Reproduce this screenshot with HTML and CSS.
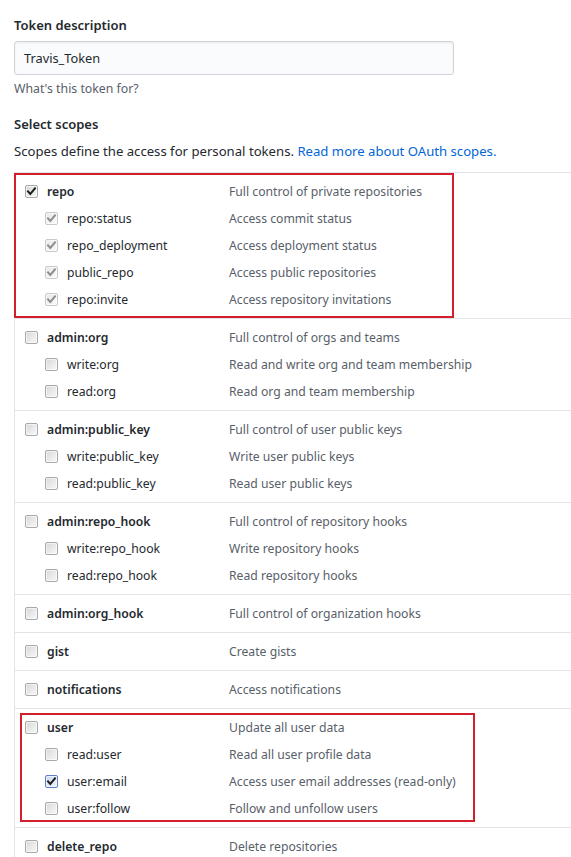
FILE: index.html
```html
<!DOCTYPE html>
<html>
<head>
<meta charset="utf-8">
<link rel="stylesheet" href="styles.css">
</head>
<body>
<div class="page">
  <div class="field-label">Token description</div>
  <div class="input">Travis_Token</div>
  <div class="note">What's this token for?</div>
  <div class="field-label scopes-title">Select scopes</div>
  <div class="intro">Scopes define the access for personal tokens. <a class="link">Read more about OAuth scopes.</a></div>

  <div class="scope-list">
    <div class="group">
      <div class="row main"><span class="cb"><svg class="chk" viewBox="0 0 13 13"><path d="M3 6.3 L5.3 9 L10 3.3"/></svg></span><span class="name">repo</span><span class="desc">Full control of private repositories</span></div>
      <div class="row sub"><span class="cb dis"><svg class="chk" viewBox="0 0 13 13"><path d="M3 6.3 L5.3 9 L10 3.3"/></svg></span><span class="name">repo:status</span><span class="desc">Access commit status</span></div>
      <div class="row sub"><span class="cb dis"><svg class="chk" viewBox="0 0 13 13"><path d="M3 6.3 L5.3 9 L10 3.3"/></svg></span><span class="name">repo_deployment</span><span class="desc">Access deployment status</span></div>
      <div class="row sub"><span class="cb dis"><svg class="chk" viewBox="0 0 13 13"><path d="M3 6.3 L5.3 9 L10 3.3"/></svg></span><span class="name">public_repo</span><span class="desc">Access public repositories</span></div>
      <div class="row sub"><span class="cb dis"><svg class="chk" viewBox="0 0 13 13"><path d="M3 6.3 L5.3 9 L10 3.3"/></svg></span><span class="name">repo:invite</span><span class="desc">Access repository invitations</span></div>
    </div>
    <div class="group">
      <div class="row main"><span class="cb"></span><span class="name">admin:org</span><span class="desc">Full control of orgs and teams</span></div>
      <div class="row sub"><span class="cb"></span><span class="name">write:org</span><span class="desc">Read and write org and team membership</span></div>
      <div class="row sub"><span class="cb"></span><span class="name">read:org</span><span class="desc">Read org and team membership</span></div>
    </div>
    <div class="group">
      <div class="row main"><span class="cb"></span><span class="name">admin:public_key</span><span class="desc">Full control of user public keys</span></div>
      <div class="row sub"><span class="cb"></span><span class="name">write:public_key</span><span class="desc">Write user public keys</span></div>
      <div class="row sub"><span class="cb"></span><span class="name">read:public_key</span><span class="desc">Read user public keys</span></div>
    </div>
    <div class="group">
      <div class="row main"><span class="cb"></span><span class="name">admin:repo_hook</span><span class="desc">Full control of repository hooks</span></div>
      <div class="row sub"><span class="cb"></span><span class="name">write:repo_hook</span><span class="desc">Write repository hooks</span></div>
      <div class="row sub"><span class="cb"></span><span class="name">read:repo_hook</span><span class="desc">Read repository hooks</span></div>
    </div>
    <div class="group">
      <div class="row main"><span class="cb"></span><span class="name">admin:org_hook</span><span class="desc">Full control of organization hooks</span></div>
    </div>
    <div class="group">
      <div class="row main"><span class="cb"></span><span class="name">gist</span><span class="desc">Create gists</span></div>
    </div>
    <div class="group">
      <div class="row main"><span class="cb"></span><span class="name">notifications</span><span class="desc">Access notifications</span></div>
    </div>
    <div class="group">
      <div class="row main"><span class="cb"></span><span class="name">user</span><span class="desc">Update all user data</span></div>
      <div class="row sub"><span class="cb"></span><span class="name">read:user</span><span class="desc">Read all user profile data</span></div>
      <div class="row sub"><span class="cb focus"><svg class="chk" viewBox="0 0 13 13"><path d="M3 6.3 L5.3 9 L10 3.3"/></svg></span><span class="name">user:email</span><span class="desc">Access user email addresses (read-only)</span></div>
      <div class="row sub"><span class="cb"></span><span class="name">user:follow</span><span class="desc">Follow and unfollow users</span></div>
    </div>
    <div class="group">
      <div class="row main"><span class="cb"></span><span class="name">delete_repo</span><span class="desc">Delete repositories</span></div>
    </div>

    <div class="mark mark-repo"></div>
    <div class="mark mark-user"></div>
  </div>
</div>
</body>
</html>
```

FILE: styles.css
```css
html, body {
  margin: 0;
  padding: 0;
  background: #fff;
}
body {
  width: 571px;
  height: 857px;
  overflow: hidden;
  font-family: "Noto Sans", "Open Sans", sans-serif;
  color: #24292e;
}
.page {
  padding: 15px 0 0 14px;
}
.field-label {
  font-size: 13px;
  font-weight: 600;
  line-height: 20px;
}
.input {
  margin-top: 6px;
  width: 420px;
  height: 32px;
  border: 1px solid #d1d5da;
  border-radius: 3px;
  background: #fafbfc;
  box-shadow: inset 0 1px 2px rgba(27,31,35,0.075);
  padding: 0 9px;
  font-size: 12.8px;
  line-height: 32px;
}
.note {
  margin-top: 4px;
  font-size: 12.3px;
  line-height: 20px;
  color: #586069;
}
.scopes-title {
  margin-top: 15px;
}
.intro {
  margin-top: 7px;
  font-size: 13.15px;
  line-height: 20px;
}
.link {
  color: #0366d6;
}
.scope-list {
  position: relative;
  margin-top: 11px;
  border-left: 1px solid #e1e4e8;
}
.group {
  border-top: 1px solid #e1e4e8;
  padding: 5px 0;
}
.row {
  height: 27px;
  display: flex;
  align-items: center;
  font-size: 12.2px;
}
.row .cb {
  flex: none;
  margin-left: 10px;
}
.row.sub .cb {
  margin-left: 30px;
}
.name {
  margin-left: 9px;
  flex: none;
}
.row.main .name {
  width: 182px;
  font-weight: 600;
}
.row.sub .name {
  width: 162px;
}
.desc {
  color: #586069;
  white-space: nowrap;
}
.cb {
  width: 11px;
  height: 11px;
  border: 1px solid #a9a9a9;
  border-radius: 2px;
  background: linear-gradient(135deg, #d7d7d7 0%, #ececec 60%, #f7f7f7 100%);
  box-shadow: inset 0 0 0 1px rgba(255,255,255,0.6);
  position: relative;
}
.cb.dis {
  border-color: #c9c9c9;
  background: linear-gradient(135deg, #e6e6e6 0%, #f3f3f3 60%, #fafafa 100%);
}
.cb.focus {
  border-color: #5d7fc6;
  background: linear-gradient(135deg, #c9d8f2 0%, #e0e9f8 60%, #eef3fb 100%);
}
.chk {
  position: absolute;
  left: -1px;
  top: -1px;
  width: 13px;
  height: 13px;
}
.chk path {
  fill: none;
  stroke: #1e1e1e;
  stroke-width: 2;
  stroke-linecap: square;
}
.cb.dis .chk path {
  stroke: #8d8d8d;
}
.mark {
  position: absolute;
  border: 2px solid #d31f2b;
  pointer-events: none;
}
.mark-repo {
  left: -1px;
  top: 1px;
  width: 436px;
  height: 141px;
}
.mark-user {
  left: 5px;
  top: 541px;
  width: 451px;
  height: 105px;
}
```
